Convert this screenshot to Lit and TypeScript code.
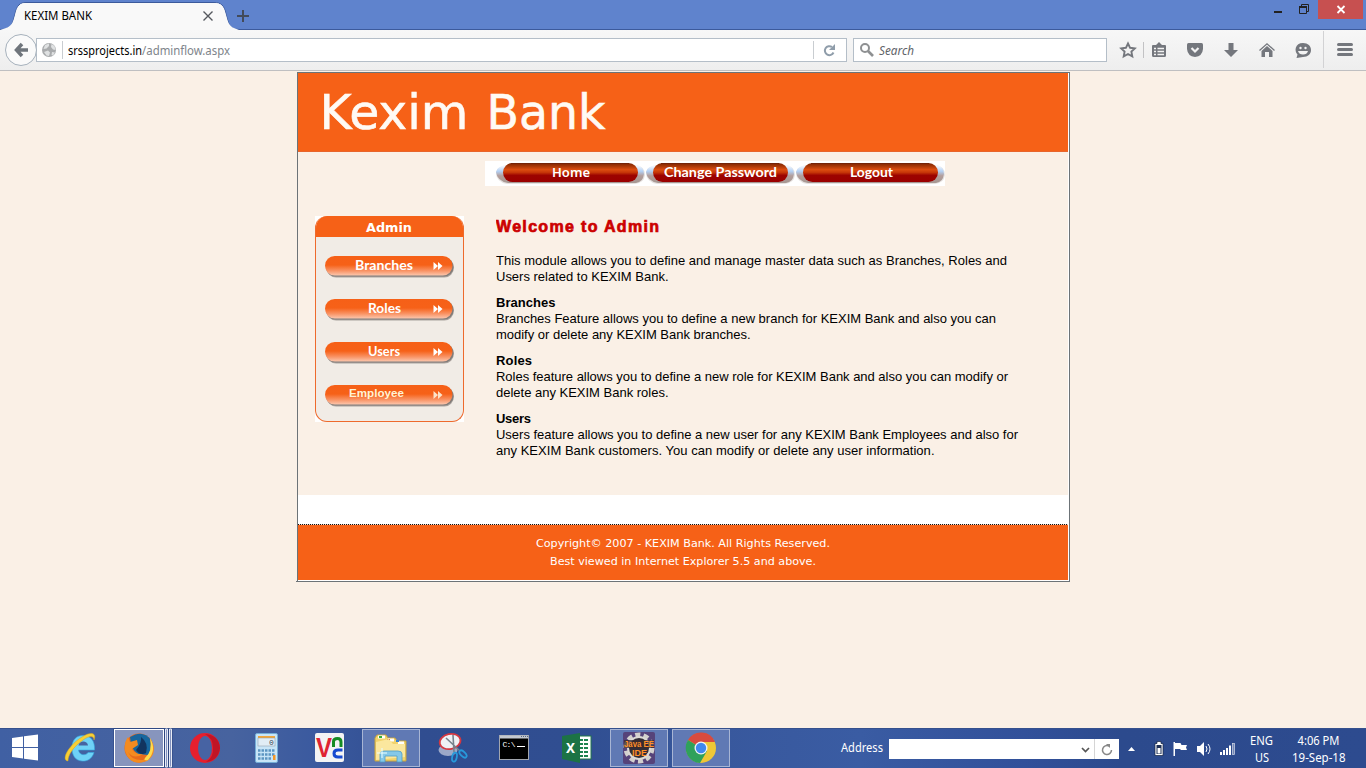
import { LitElement, html, css, svg } from "lit";
import { customElement, property } from "lit/decorators.js";

@customElement("browser-chrome")
class BrowserChrome extends LitElement {
  static styles = css`
    :host { display: block; height: 71px; font-family: "Noto Sans", sans-serif; }
    svg { display: block; }
    .tabs { height: 30px; background: #5f83cd; display: flex; justify-content: space-between; }
    .bar { box-sizing: border-box; height: 41px; border-bottom: 1px solid #bfbfc1; background: linear-gradient(#f7f7f7, #eeeeee); display: flex; align-items: center; padding-left: 5px; }
    .back { flex: none; z-index: 1; }
    .url { box-sizing: border-box; height: 24px; width: 811px; margin-left: -1px; border: 1px solid #b4bec8; background: #fff; }
    .search { box-sizing: border-box; height: 24px; width: 254px; margin-left: 6px; border: 1px solid #b4bec8; background: #fff; }
    .tools { margin-left: 1px; }
  `;
  render() {
    return html`
      <div class="tabs">
        <svg width="260" height="30" viewBox="0 0 260 30">
          <path d="M0 29.5C12 29.5 12 25 15 14C17 5 20 2.500 26 2.500H214C221 2.500 224 5 226 14C229 25 229 29.500 240 29.500" fill="#f8f8f8" stroke="#3c5a9c" />
          <path d="M0 29.500H260" stroke="#3c5a9c" />
          <path d="M0 30L6 28C12 26 13 22 15 15C17 6 20 3 26 3H214C221 3 224 6 226 15C228 22 229 26 234 28L239 30z" fill="#f9f9f9" />
          <text x="24" y="20" font-size="12" textLength="68" lengthAdjust="spacingAndGlyphs" fill="#000">KEXIM BANK</text>
          <path d="M203.500 11.500L212.500 20.500M212.500 11.500L203.500 20.500" stroke="#55585e" stroke-width="1.400" fill="none" />
          <path d="M237 16H249M243 10V22" stroke="#434b5a" stroke-width="2" />
        </svg>
        <svg width="1106" height="30" viewBox="260 0 1106 30">
          <path d="M260 29.500H1366" stroke="#3c5a9c" />
          <rect x="1274" y="11" width="8" height="2" fill="#222" />
          <path d="M1301.500 6V4.500H1308.500V11.500H1307M1299.500 6.500H1306.500V13.500H1299.500z" stroke="#222" fill="none" />
          <path d="M1299 7H1307" stroke="#222" stroke-width="2" />
          <rect x="1318" width="45" height="19" fill="#c75050" />
          <path d="M1337.500 6L1344.500 13M1344.500 6L1337.500 13" stroke="#fff" stroke-width="1.800" />
        </svg>
      </div>
      <div class="bar">
        <svg class="back" width="32" height="40" viewBox="5 30 32 40">
          <circle cx="21" cy="50" r="15.500" fill="#fafafa" stroke="#a6b1bc" />
          <path d="M28 50H18M22 44L16.500 50L22 56" stroke="#6f757c" stroke-width="3.500" fill="none" />
        </svg>
        <div class="url">
          <svg width="809" height="22" viewBox="37 39 809 22">
            <circle cx="49" cy="50" r="7" fill="#a9abad" />
            <path d="M45 45L49 43.500L49 46L46.500 48.500L43.500 49zM51.500 44L54.500 46L55.500 50L53 49.500L51 47zM44 52L48 50.500L50 52.500L49 56L46.500 55.500zM52 52L55 52.500L53 55.500L51.500 55z" fill="#dfe1e2" />
            <path d="M62.500 41V59M813.500 41V59" stroke="#c9cdd1" />
            <text x="68" y="55" font-size="12" textLength="74" lengthAdjust="spacingAndGlyphs" fill="#000">srssprojects.in</text>
            <text x="142" y="55" font-size="12" textLength="88" lengthAdjust="spacingAndGlyphs" fill="#80858b">/adminflow.aspx</text>
            <path d="M832 47A4.500 4.500 0 1 0 833.500 52.500" stroke="#8f9daa" stroke-width="2" fill="none" />
            <path d="M835 44V50H829z" fill="#8f9daa" />
          </svg>
        </div>
        <div class="search">
          <svg width="252" height="22" viewBox="854 39 252 22">
            <circle cx="865" cy="48" r="4" stroke="#8e9092" stroke-width="2" fill="none" />
            <path d="M868 51L873 56" stroke="#8e9092" stroke-width="2.600" />
            <text x="879" y="55" font-size="12" font-style="italic" textLength="35" lengthAdjust="spacingAndGlyphs" fill="#606368">Search</text>
          </svg>
        </div>
        <svg class="tools" width="258" height="40" viewBox="1108 30 258 40">
          <path d="M1128 43.500L1130.100 47.800L1134.800 48.400L1131.400 51.600L1132.300 56.400L1128 54L1123.700 56.400L1124.600 51.600L1121.200 48.400L1125.900 47.800z" fill="none" stroke="#74777d" stroke-width="1.900" />
          <path d="M1143.500 42V58" stroke="#c2c2c4" />
          <path d="M1152 46Q1152 45 1153 45H1156L1159 42L1162 45H1165Q1166 45 1166 46V55.500Q1166 57 1164.500 57H1153.500Q1152 57 1152 55.500z" fill="#74777d" />
          <path d="M1154 48.500H1156M1157.500 48.500H1164M1154 51.500H1156M1157.500 51.500H1164M1154 54.500H1156M1157.500 54.500H1164" stroke="#f3f3f3" stroke-width="1.400" />
          <path d="M1187 44.500Q1187 43 1188.500 43H1201.500Q1203 43 1203 44.500V49Q1202.500 56 1195 57Q1187.500 56 1187 49z" fill="#74777d" />
          <path d="M1191.500 48L1195 51.500L1198.500 48" stroke="#f3f3f3" stroke-width="2.200" fill="none" />
          <path d="M1228.500 43H1233.500V50H1238L1231 57L1224 50H1228.500z" fill="#74777d" />
          <path d="M1259.500 50.500L1267 43.800L1274.500 50.500" stroke="#74777d" stroke-width="1.300" fill="none" />
          <path d="M1261.500 51L1267 46L1272.500 51V57H1269V52H1265V57H1261.500z" fill="#74777d" />
          <path d="M1303 43C1308 43 1311 46 1311 50C1311 54 1308 57 1303 57L1296.500 58L1297.500 54.500C1294 51 1295 43 1303 43z" fill="#74777d" />
          <circle cx="1300.500" cy="48" r="1.200" fill="#f3f3f3" /><circle cx="1305.500" cy="48" r="1.200" fill="#f3f3f3" />
          <path d="M1298 51H1308Q1307 54.500 1303 54.500Q1299 54.500 1298 51z" fill="#f3f3f3" />
          <path d="M1323.500 31V68" stroke="#d2d2d4" />
          <path d="M1338.500 44.500H1351.500M1338.500 49.500H1351.500M1338.500 54.500H1351.500" stroke="#74777d" stroke-width="3" stroke-linecap="round" />
        </svg>
      </div>
    `;
  }
}

@customElement("nav-pill")
class NavPill extends LitElement {
  @property() label = "";
  @property({ type: Number }) span = 40;
  @property({ type: Number }) start = 50;
  @property() face = "label";
  static styles = css`
    :host { display: block; width: 150px; height: 25px; }
    svg { display: block; }
    .label { font: 600 13px "Noto Sans", sans-serif; }
    .geo { font: 700 13.5px "Lato", sans-serif; }
  `;
  render() {
    return html`<svg width="150" height="25" viewBox="0 0 150 25">
      <defs>
        <linearGradient id="f" x2="0" y2="1"><stop offset="0" stop-color="#7a2305" /><stop offset=".12" stop-color="#9c3205" /><stop offset=".35" stop-color="#dc4d10" /><stop offset=".5" stop-color="#c53508" /><stop offset=".65" stop-color="#9c0300" /><stop offset="1" stop-color="#9a0000" /></linearGradient>
        <linearGradient id="s" x2="0" y2="1"><stop offset="0" stop-color="#fff" /><stop offset=".35" stop-color="#b3d0f4" /><stop offset=".6" stop-color="#b39e9b" /><stop offset="1" stop-color="#a59792" /></linearGradient>
      </defs>
      <path d="M14 4H140Q150 5 150 14Q149 22 140 23H12Q1 21 1 11Q2 5 14 4z" fill="#cfcac7" opacity=".55" />
      <path d="M12 4H141Q149 5 149 13Q148 21 141 22H13Q2 20 1 11Q2 5 12 4z" fill="url(#s)" />
      <rect x="8" y="2" width="135" height="19" rx="9.500" fill="url(#f)" />
      <path d="M16 2.500H134" stroke="#752408" />
      <text class=${this.face} x=${this.start} y="16" fill="#fff" textLength=${this.span} lengthAdjust="spacingAndGlyphs">${this.label}</text>
    </svg>`;
  }
}

@customElement("side-pill")
class SidePill extends LitElement {
  @property() label = "";
  @property({ type: Number }) span = 40;
  @property({ type: Number }) start = 50;
  @property({ type: Boolean }) plain = false;
  static styles = css`
    :host { display: block; width: 130px; height: 22px; }
    svg { display: block; }
    .round { font: 700 13.5px "Lato", sans-serif; }
    .plain { font: 700 11px "Liberation Sans", sans-serif; }
  `;
  render() {
    return html`<svg width="130" height="22" viewBox="0 0 130 22">
      <defs><linearGradient id="g" x2="0" y2="1"><stop offset="0" stop-color="#f66017" /><stop offset=".46" stop-color="#f66118" /><stop offset=".75" stop-color="#f99263" /><stop offset="1" stop-color="#fbc6ad" /></linearGradient></defs>
      <rect x="1.500" y="2" width="127.500" height="19.500" rx="9.700" fill="#aaa39e" />
      <rect x="1" y="1.500" width="127.500" height="19" rx="9.500" fill="#817b78" />
      <rect width="127.500" height="19.500" rx="9.700" fill="url(#g)" />
      <text class=${this.plain ? "plain" : "round"} x=${this.start} y=${this.plain ? 12 : 14} fill=${this.plain ? "#fff2d4" : "#fff"} textLength=${this.span} lengthAdjust="spacingAndGlyphs">${this.label}</text>
      <path d="M108.500 6L113 10L108.500 14zM113 6L117.500 10L113 14z" fill=${this.plain ? "#fce3c8" : "#fff"} />
    </svg>`;
  }
}

const APPS = [
  { x: 0, art: svg`<path d="M12 738L23 736.500V747H12zM24 736.300L38 734.500V747H24zM12 748H23V758.500L12 757zM24 748H38V760.500L24 758.700z" fill="#fff"/>` },
  { x: 56, art: svg`<path d="M72 748C72 739 77 735.500 83 735.500C91 735.500 95 741 94.500 750H78.500C79 755.500 86 756 88 752.500H94C92 759 87 761.500 82 761C75 760.500 72 755 72 748z" fill="#6ed2f7" stroke="#38ace0" stroke-width=".6"/><path d="M78.500 745.500C79 740 87.500 740 88 745.500z" fill="#4563a2"/><path d="M68 761C60 760 70 744 82 737C91 731 97 733 94 740C94 736 90 735 83 740C73 747 68 755 68 761" fill="#f8cf35" stroke="#d7a71e" stroke-width=".5"/>` },
  { x: 112, art: svg`<rect x="113.500" y="728.500" width="59" height="39" fill="#2c457f"/><rect x="114.500" y="729.500" width="49" height="37" fill="#8795bd" stroke="#fff"/><path d="M165.500 729V767H167.500V729zM169.500 729V767H171.500V729z" fill="#8191bd" stroke="#e7ebf5"/><circle cx="139" cy="748" r="14.500" fill="#e86b1c"/><path d="M130 737Q143 729 151 740Q154 749 148 755L138 754Q131 750 130 737z" fill="#17669e"/><path d="M141 737Q149 743 146 753Q140 756 136 750Q142 743 141 737z" fill="#12345f"/><path d="M150 738Q159 753 147 761Q130 767 125 751Q124 742 128 737L130 742L137 740L138 745L132 749Q135 755 143 754Q134 760 128 752Q132 761 143 760Q153 756 150 738z" fill="#f48b20"/><path d="M150 738Q157 750 148 760Q143 761 145 758Q153 751 150 738z" fill="#ffdb4c"/>` },
  { x: 176, art: svg`<ellipse cx="205" cy="748" rx="15" ry="15" fill="#e51f2e"/><path d="M205 734Q219 735 220 748Q218 761 206 762Q214 757 213 748Q213 738 205 734z" fill="#c01526"/><ellipse cx="205" cy="748" rx="7" ry="12" fill="#4763a3"/>` },
  { x: 236, art: svg`<rect x="255.500" y="733.500" width="22" height="29" rx="1.500" fill="#c8e5f7" stroke="#75aed7"/><rect x="258" y="736" width="17" height="2" fill="#f2a63b"/><rect x="258" y="738" width="17" height="8" fill="#e1edf5" stroke="#8697a3" stroke-width=".5"/><text x="269" y="745" font-size="8" font-family="Liberation Mono" fill="#364957">0</text><path d="M258 750.500H275M258 754.500H275M258 758.500H272" stroke="#5c95c1" stroke-width="2.500" stroke-dasharray="2.500 1"/><rect x="273" y="755" width="2.500" height="5" fill="#f39727"/>` },
  { x: 300, art: svg`<rect x="315" y="733" width="29" height="29" rx="2" fill="#f4f4f4"/><text x="316" y="757" textLength="16" lengthAdjust="spacingAndGlyphs" font-size="27" font-family="Liberation Sans" font-weight="700" fill="#df2432">V</text><path d="M333.500 747V741.500Q333.500 738.500 337.500 738.500Q341 738.500 341 742V747" stroke="#168c24" stroke-width="3" fill="none"/><path d="M342.500 750H338Q334 750 334 753.500Q334 757 338 757H342.500" stroke="#174ad0" stroke-width="3" fill="none"/>` },
  { x: 361, art: svg`<rect x="362.500" y="729.500" width="57" height="37" fill="#6079b4" stroke="#a8b5d4"/><path d="M377 735H386L388 738H395L397 741H406V761H375V738z" fill="#f2d36b" stroke="#c5a443"/><path d="M378 737H385M388 740H394M398 743H404" stroke="#fff" stroke-width="3"/><path d="M379 737H382" stroke="#2caf3b" stroke-width="2"/><path d="M387 740H390" stroke="#ce4624" stroke-width="2"/><path d="M396 741H399" stroke="#397fd0" stroke-width="2"/><path d="M376 742L389 739L393 744H405V757L376 760z" fill="#fbe79e"/><path d="M380 762V754Q380 751 384 751H398Q402 751 402 754V762H397V756H385V762z" fill="#85c8e8" stroke="#4f9dc4" stroke-width=".8"/><path d="M382 748V758M377 753H387" stroke="#eaffff"/>` },
  { x: 423, art: svg`<ellipse cx="448" cy="750" rx="9.500" ry="6" fill="#9ca8c8"/><ellipse cx="450" cy="741.500" rx="10.500" ry="7.500" transform="rotate(-12 450 741)" fill="#eff1f5" stroke="#d43841" stroke-width="1.800"/><path d="M446 738L460 751M453 735L454 752" stroke="#77818b" stroke-width="1.600"/><ellipse cx="454.500" cy="757" rx="2.300" ry="4.500" transform="rotate(12 454 757)" fill="none" stroke="#2799db" stroke-width="1.800"/><ellipse cx="463" cy="754" rx="2.300" ry="4.500" transform="rotate(-45 463 754)" fill="none" stroke="#2799db" stroke-width="1.800"/>` },
  { x: 485, art: svg`<rect x="499.500" y="735.500" width="29" height="24" fill="#000" stroke="#a2a6ae"/><path d="M500 737H528" stroke="#c3c8d0" stroke-width="3"/><path d="M521 736.500H528" stroke="#566781" stroke-dasharray="1 1"/><text x="502.500" y="747" font-size="8" font-family="Liberation Mono" textLength="13" fill="#fff">C:\\</text><path d="M517 746.500H525" stroke="#fff"/>` },
  { x: 547, art: svg`<rect x="576" y="736" width="15" height="23" fill="#fff" stroke="#23784a"/><path d="M579 740H589M579 744H589M579 748H589M579 752H589M579 756H589" stroke="#1d8250" stroke-width="2" stroke-dasharray="4 1"/><path d="M562 736L580 733V763L562 759z" fill="#1c7345"/><text x="566" y="753" font-size="14" font-family="Noto Sans" font-weight="700" textLength="9" lengthAdjust="spacingAndGlyphs" fill="#fff">X</text>` },
  { x: 609, art: svg`<rect x="610.500" y="729.500" width="57" height="37" fill="#6079b4" stroke="#a8b5d4"/><rect x="623" y="732" width="32" height="32" rx="2" fill="#56437a"/><circle cx="639" cy="748" r="13" fill="none" stroke="#d3d1ce" stroke-width="5" stroke-dasharray="5 3.170"/><circle cx="639" cy="748" r="11" fill="#332d36" stroke="#dcdad5" stroke-width="2"/><rect x="624" y="740" width="30" height="8" fill="#3a2a2c" opacity=".75"/><g font-family="Liberation Sans" font-size="8.500" font-weight="700" fill="#ff8f28"><text x="624" y="746.600" textLength="30" lengthAdjust="spacingAndGlyphs">Java EE</text><text x="632" y="756.200" textLength="15" lengthAdjust="spacingAndGlyphs">IDE</text></g>` },
  { x: 671, art: svg`<rect x="672.500" y="729.500" width="57" height="37" fill="#6079b4" stroke="#a8b5d4"/><circle cx="701" cy="748" r="15" fill="#efc736"/><path d="M701 748L688 740A15 15 0 0 1 715 742H701z" fill="#d84b3f"/><path d="M688 740A15 15 0 0 0 700 763L707 751L701 748z" fill="#2fa15b"/><circle cx="701" cy="748" r="6.500" fill="#f2f4f6"/><circle cx="701" cy="748" r="5.200" fill="#4188ef"/>` },
];

@customElement("task-bar")
class TaskBar extends LitElement {
  static styles = css`
    :host { display: flex; justify-content: space-between; height: 40px; background: linear-gradient(90deg, #4060a3 0, #47639f 17%, #3b5a9f 23%, #304d90 30%, #304e91 42%, #38589d 53%, #3a5ca3 63%, #31509a 75%, #2c4a8d 82%, #2d4b8f 100%); box-shadow: inset 0 1px #35508d; font-family: "Noto Sans", sans-serif; }
    svg { display: block; }
    .apps { display: flex; }
  `;
  render() {
    return html`
      <div class="apps">${APPS.map((a, i) => {
        const w = (APPS[i + 1]?.x ?? 735) - a.x;
        return html`<svg width=${w} height="40" viewBox="${a.x} 728 ${w} 40">${a.art}</svg>`;
      })}</div>
      <svg width="536" height="40" viewBox="830 728 536 40" fill="#fff">
        <text x="841" y="752" font-size="12" textLength="42" lengthAdjust="spacingAndGlyphs">Address</text>
        <rect x="889" y="739" width="230" height="20" />
        <path d="M1094.500 739V759" stroke="#d5d5d5" />
        <path d="M1082 748L1085.500 751.500L1089 748" fill="none" stroke="#555" stroke-width="1.700" />
        <path d="M1109 746A4.500 4.500 0 1 0 1111.500 750" fill="none" stroke="#888" stroke-width="1.500" /><path d="M1106 744H1110V748z" fill="#888" />
        <path d="M1128 751L1131.500 747L1135 751z" />
        <path d="M1157 743.500V741.500H1161V743.500H1163V755.500H1155V743.500z" fill="#fff" stroke="#14233f" stroke-width=".7" /><path d="M1156.500 745H1161.500V754H1156.500z" fill="#1d2f55" /><rect x="1157.500" y="748" width="3" height="5.500" />
        <path d="M1173.500 742H1175V756H1173.500zM1175 743H1180.500L1181.500 745H1187L1186 747.500L1187 750H1181L1180 749H1175z" />
        <path d="M1197 746H1200L1204 742V756L1200 752H1197z" /><path d="M1206 746Q1208 749 1206 752M1208 744Q1212 749 1208 754" fill="none" stroke="#fff" />
        <path d="M1220 752H1222V755H1220zM1223 750H1225V755H1223zM1226 748H1228V755H1226zM1229 745.500H1231V755H1229z" /><rect x="1232.500" y="743.500" width="2" height="11" fill="#7388b6" stroke="#d6dbe8" stroke-width=".7" />
        <g font-size="12"><text x="1250" y="745" textLength="23" lengthAdjust="spacingAndGlyphs">ENG</text><text x="1255" y="762" textLength="14" lengthAdjust="spacingAndGlyphs">US</text>
        <text x="1297.500" y="745" textLength="42" lengthAdjust="spacingAndGlyphs">4:06 PM</text><text x="1292" y="762" textLength="53.500" lengthAdjust="spacingAndGlyphs">19-Sep-18</text></g>
      </svg>
    `;
  }
}

const SECTIONS: { title?: string; lines: [string, number][] }[] = [
  { lines: [["This module allows you to define and manage master data such as Branches, Roles and", 511], ["Users related to KEXIM Bank.", 172.5]] },
  { title: "Branches", lines: [["Branches Feature allows you to define a new branch for KEXIM Bank and also you can", 500], ["modify or delete any KEXIM Bank branches.", 254.5]] },
  { title: "Roles", lines: [["Roles feature allows you to define a new role for KEXIM Bank and also you can modify or", 512], ["delete any KEXIM Bank roles.", 172.5]] },
  { title: "Users", lines: [["Users feature allows you to define a new user for any KEXIM Bank Employees and also for", 522], ["any KEXIM Bank customers. You can modify or delete any user information.", 438.5]] },
];
const TITLE_WIDTHS: Record<string, number> = { Branches: 59.5, Roles: 36, Users: 35 };

@customElement("app-root")
class AppRoot extends LitElement {
  static styles = css`
    :host { display: flex; flex-direction: column; width: 1366px; height: 768px; overflow: hidden; background: #faf0e6; }
    svg { display: block; }
    main { flex: 1; padding: 1px 0 0 296px; }
    .frame { box-sizing: border-box; width: 774px; height: 510px; border-bottom: 1px solid #6c7377; padding-left: 1px; }
    .sheet { box-sizing: border-box; width: 773px; height: 509px; border: 1px solid #6c7377; border-bottom: 0; padding-right: 1px; background: #fff; }
    .banner { height: 79px; background: #f66117; border-bottom: 1px solid #e8652c; box-sizing: border-box; }
    .middle { height: 343px; background: #faf0e6; display: flex; }
    .side { width: 149px; margin: 64px 0 0 17px; height: 206px; background: #fff; }
    .panel { box-sizing: border-box; height: 206px; border: 1px solid #ee6a2c; border-top: 0; border-radius: 12px; overflow: hidden; background: #f1ece6; }
    .head { height: 21px; background: #f66117; }
    .links { display: grid; gap: 21px; padding: 19px 0 0 9px; }
    .content { margin-left: 21px; }
    .nav { margin-top: 9px; width: 460px; height: 25px; background: #fff; display: flex; padding-left: 10px; box-sizing: border-box; }
    .text { padding: 30px 0 0 11px; font-family: "Liberation Sans", sans-serif; }
    .copy { display: grid; gap: 10px; padding-top: 15px; }
    .gap { height: 29px; }
    .dots { height: 1px; background: repeating-linear-gradient(90deg, #111 0 1px, #f5dccd 1px 2px); }
    .foot { height: 55px; background: #f66117; }
    .verdana { font-family: "DejaVu Sans", sans-serif; }
  `;
  line(text: string, width: number, bold = false) {
    return html`<svg width="540" height="16"><text y="12" font-size="13" font-weight=${bold ? 700 : 400} textLength=${width} fill="#000">${text}</text></svg>`;
  }
  render() {
    return html`
      <browser-chrome></browser-chrome>
      <main>
        <div class="frame"><div class="sheet">
          <div class="banner"><svg class="verdana" width="400" height="78" font-size="48" fill="#fffaf4" stroke="#fffaf4" stroke-width=".6"><text x="21.500" y="56" textLength="149" lengthAdjust="spacingAndGlyphs">Kexim</text><text x="188.500" y="56" textLength="119" lengthAdjust="spacingAndGlyphs">Bank</text></svg></div>
          <div class="middle">
            <div class="side"><div class="panel">
              <div class="head"><svg class="verdana" width="147" height="21"><text x="50" y="16" font-size="13" font-weight="700" textLength="46" lengthAdjust="spacingAndGlyphs" fill="#fff">Admin</text></svg></div>
              <div class="links">
                <side-pill label="Branches" start="30" span="58"></side-pill>
                <side-pill label="Roles" start="43" span="33"></side-pill>
                <side-pill label="Users" start="43" span="32"></side-pill>
                <side-pill label="Employee" start="24" span="55" plain></side-pill>
              </div>
            </div></div>
            <div class="content">
              <div class="nav">
                <nav-pill label="Home" start="57" span="38"></nav-pill>
                <nav-pill label="Change Password" start="19" span="113" face="geo"></nav-pill>
                <nav-pill label="Logout" start="55" span="43" face="geo"></nav-pill>
              </div>
              <div class="text">
                <svg width="300" height="22"><text y="16" font-size="16" font-weight="700" textLength="163" fill="#c00" stroke="#c00" stroke-width=".7">Welcome to Admin</text></svg>
                <div class="copy">${SECTIONS.map((s) => html`<section>
                  ${s.title ? this.line(s.title, TITLE_WIDTHS[s.title], true) : ""}
                  ${s.lines.map(([t, w]) => this.line(t, w))}
                </section>`)}</div>
              </div>
            </div>
          </div>
          <div class="gap"></div>
          <div class="dots"></div>
          <div class="foot"><svg class="verdana" width="770" height="55" fill="#fff" font-size="10">
            <text x="238" y="22" textLength="294" lengthAdjust="spacingAndGlyphs">Copyright© 2007 - KEXIM Bank. All Rights Reserved.</text>
            <text x="252" y="40" textLength="266" lengthAdjust="spacingAndGlyphs">Best viewed in Internet Explorer 5.5 and above.</text>
          </svg></div>
        </div></div>
      </main>
      <task-bar></task-bar>
    `;
  }
}
